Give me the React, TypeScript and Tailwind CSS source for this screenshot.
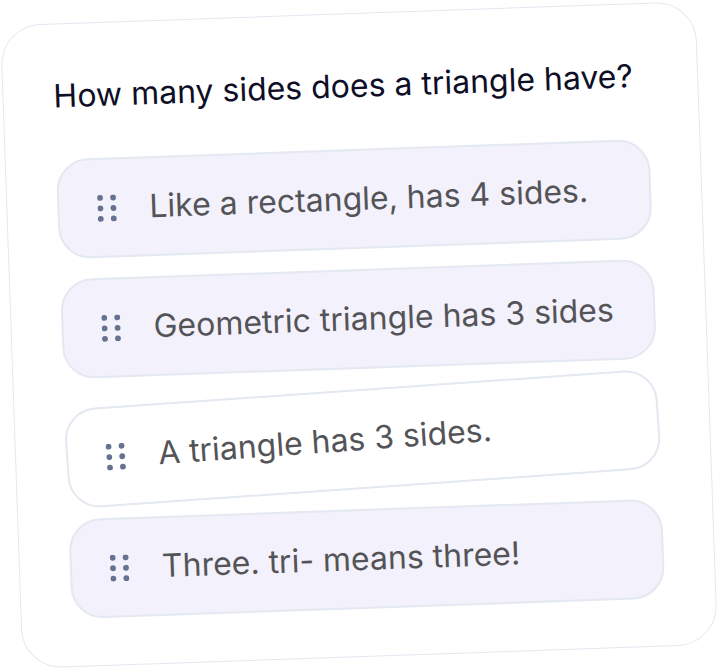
const options = [
  { text: "Like a rectangle, has 4 sides.", dragging: false },
  { text: "Geometric triangle has 3 sides", dragging: false },
  { text: "A triangle has 3 sides.", dragging: true },
  { text: "Three. tri- means three!", dragging: false },
];

function GripDots() {
  return (
    <svg width="20" height="27" viewBox="0 0 20 27" className="shrink-0 text-[#66728f]">
      {[3, 16].map((cx) =>
        [3, 13.5, 24].map((cy) => (
          <circle key={`${cx}-${cy}`} cx={cx} cy={cy} r="2.9" fill="currentColor" />
        ))
      )}
    </svg>
  );
}

export default function App() {
  return (
    <div className="flex h-screen w-full items-center justify-center overflow-hidden bg-white font-['Inter','Noto_Sans',sans-serif]">
      <div className="w-[696px] h-[644px] shrink-0 rotate-[-2deg] rounded-[40px] border border-[#e3e8f1] bg-white p-[50px]">
        <h1 className="mb-[42px] text-[32px] font-normal leading-[43px] text-[#0e0e26]">
          How many sides does a triangle have?
        </h1>

        <div className="flex flex-col gap-[20px]">
          {options.map((item) => (
            <div
              key={item.text}
              className={
                item.dragging
                  ? "flex h-[100px] rotate-[-2deg] items-center rounded-[32px] border-2 border-[#e3e8f1] bg-white pl-[38px]"
                  : "flex h-[100px] items-center rounded-[32px] border-2 border-[#e3e8f1] bg-[#f3f1fb] pl-[38px]"
              }
            >
              <GripDots />
              <span className="ml-[32px] text-[32px] leading-none text-[#545458]">{item.text}</span>
            </div>
          ))}
        </div>
      </div>
    </div>
  );
}
